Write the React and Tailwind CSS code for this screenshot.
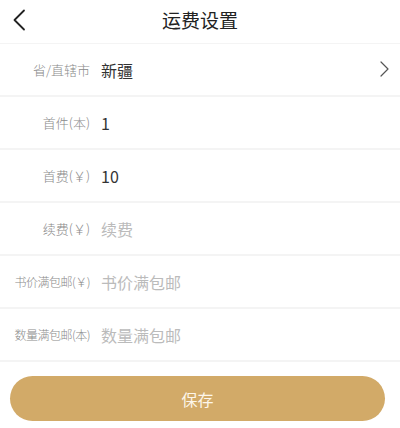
const rows = [
  { label: "省/直辖市", value: "新疆", arrow: true },
  { label: "首件(本)", value: "1" },
  { label: "首费(￥)", value: "10" },
  { label: "续费(￥)", placeholder: "续费" },
  { label: "书价满包邮(￥)", placeholder: "书价满包邮", small: true },
  { label: "数量满包邮(本)", placeholder: "数量满包邮", small: true },
];

const font = { fontFamily: '"Noto Sans CJK SC", "Noto Sans", sans-serif' };

export default function App() {
  return (
    <div className="w-[400px] h-[428px] bg-white flex flex-col" style={font}>
      <header className="h-[43px] flex items-center relative">
        <svg className="absolute left-[12px] top-[9px]" width="14" height="22" viewBox="0 0 14 22" fill="none">
          <path d="M12 1.5 L2.5 11 L12 20.5" stroke="#222" strokeWidth="1.8" strokeLinecap="round" strokeLinejoin="round" />
        </svg>
        <h1 className="w-full text-center text-[19px] font-normal text-[#222] leading-none -mt-[4px]">运费设置</h1>
      </header>
      <div className="h-[1px] bg-[#f4f4f4]" />
      {rows.map((row) => (
        <div key={row.label}>
          <div className="h-[51px] flex items-center">
            <div
              className={`w-[90px] shrink-0 text-right text-[#8a8a8a] font-light whitespace-nowrap ${row.small ? "text-[12px] tracking-[-0.5px]" : "text-[13px]"}`}
            >
              {row.label}
            </div>
            <div className={`ml-[11px] flex-1 text-[16px] ${row.value ? "text-[#333]" : "text-[#bbb]"}`}>
              {row.value ?? row.placeholder}
            </div>
            {row.arrow && (
              <svg className="mr-[11px] mb-[2px]" width="9" height="16" viewBox="0 0 9 16" fill="none">
                <path d="M1 1 L8 8 L1 15" stroke="#555" strokeWidth="1.2" strokeLinecap="round" strokeLinejoin="round" />
              </svg>
            )}
          </div>
          <div className="h-[2px] bg-[#f4f4f4]" />
        </div>
      ))}
      <div className="px-[10px] pt-[14px]">
        <button className="w-[375px] h-[45px] rounded-full bg-[#d2aa68] text-[#fdf6ea] text-[16px]">保存</button>
      </div>
    </div>
  );
}
